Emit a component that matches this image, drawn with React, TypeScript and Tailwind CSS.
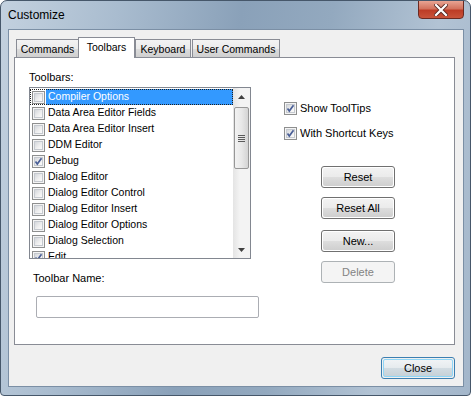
import React from 'react';

const toolbars = [
  { name: 'Compiler Options', checked: false },
  { name: 'Data Area Editor Fields', checked: false },
  { name: 'Data Area Editor Insert', checked: false },
  { name: 'DDM Editor', checked: false },
  { name: 'Debug', checked: true },
  { name: 'Dialog Editor', checked: false },
  { name: 'Dialog Editor Control', checked: false },
  { name: 'Dialog Editor Insert', checked: false },
  { name: 'Dialog Editor Options', checked: false },
  { name: 'Dialog Selection', checked: false },
  { name: 'Edit', checked: true },
];

const tabs = [
  { label: 'Commands', width: 'w-[63px]' },
  { label: 'Toolbars', width: 'w-[57px]' },
  { label: 'Keyboard', width: 'w-[56px]' },
  { label: 'User Commands', width: 'w-[88px]' },
];

const CheckBox = ({ checked }: { checked: boolean }) => (
  <div className="w-[13px] h-[13px] shrink-0 border border-[#8e8f8f] bg-[#f4f4f4] p-px">
    <div className="relative w-full h-full border border-[#c5c9cf] bg-[linear-gradient(135deg,#d4d7db_0%,#f0f0f0_60%,#fbfbfb_100%)]">
      {checked && (
        <svg className="absolute -left-[2px] -top-[2px]" width="11" height="11" viewBox="0 0 11 11">
          <path d="M2.5 5.5 L4.3 8 L8.5 2.2" fill="none" stroke="#4a5f97" strokeWidth="1.7" />
        </svg>
      )}
    </div>
  </div>
);

const Button = ({ label, disabled, isDefault }: { label: string; disabled?: boolean; isDefault?: boolean }) => {
  if (disabled) {
    return (
      <div className="w-[74px] h-[22px] rounded-[3px] border border-[#adb2b5] bg-[#f4f4f4] flex items-center justify-center text-[#838383]">
        {label}
      </div>
    );
  }
  return (
    <div
      className={`w-[74px] h-[22px] rounded-[3px] border ${
        isDefault ? 'border-[#3c7fb1]' : 'border-[#707070]'
      } p-px`}
    >
      <div
        className={`w-full h-full rounded-[2px] flex items-center justify-center text-black ${
          isDefault
            ? 'border border-[#8fd6f7] bg-[linear-gradient(180deg,#f0f3f5_0%,#e6ebee_48%,#d2dce2_52%,#c6d1d8_100%)]'
            : 'bg-[linear-gradient(180deg,#f2f2f2_0%,#ebebeb_48%,#dddddd_52%,#cfcfcf_100%)]'
        }`}
      >
        {label}
      </div>
    </div>
  );
};

const ScrollBar = () => (
  <div className="w-[17px] h-full flex flex-col bg-[linear-gradient(90deg,#e4e4e4_0%,#f3f3f3_40%,#f3f3f3_100%)]">
    <div className="h-[17px] flex items-center justify-center">
      <svg width="7" height="4" viewBox="0 0 7 4">
        <path d="M0 4 L3.5 0 L7 4 Z" fill="#404040" />
      </svg>
    </div>
    <div className="mx-px mt-[2px] h-[62px] rounded-[2px] border border-[#979797] bg-[linear-gradient(90deg,#f2f2f2_0%,#e8e8e8_50%,#d4d4d4_100%)] flex flex-col items-center justify-center gap-px">
      <div className="w-[7px] h-px bg-[#5a5a5a]" />
      <div className="w-[7px] h-px bg-[#5a5a5a]" />
      <div className="w-[7px] h-px bg-[#5a5a5a]" />
      <div className="w-[7px] h-px bg-[#5a5a5a]" />
    </div>
    <div className="flex-1" />
    <div className="h-[17px] flex items-center justify-center">
      <svg width="7" height="4" viewBox="0 0 7 4">
        <path d="M0 0 L7 0 L3.5 4 Z" fill="#404040" />
      </svg>
    </div>
  </div>
);

export default function App() {
  return (
    <div
      className="w-[471px] h-[396px] overflow-hidden rounded-t-[7px] rounded-b-[4px] border border-[#46576a] bg-[linear-gradient(100deg,#c3d1df_0%,#a9bccf_22%,#8aa1b9_45%,#93a9bf_62%,#b2c3d4_82%,#a3b6ca_100%)] text-[11px] text-black"
      style={{ fontFamily: '"Liberation Sans", Arial, sans-serif' }}
    >
      {/* title bar */}
      <div className="h-[28px] flex items-start justify-between pl-[7px] pr-[6px]">
        <div className="mt-[7px] text-[12px] leading-[15px] text-black">Customize</div>
        <div className="w-[46px] h-[19px] -mt-px rounded-b-[4px] border border-[#6b2a22] bg-[linear-gradient(180deg,#e8a493_0%,#d2735e_45%,#bd3c26_55%,#c9533a_100%)] flex items-center justify-center">
          <svg width="14" height="12" viewBox="0 0 14 12">
            <path d="M2 1 L12 11 M12 1 L2 11" stroke="#5b2a24" strokeWidth="4" strokeLinecap="square" />
            <path d="M2 1 L12 11 M12 1 L2 11" stroke="#ffffff" strokeWidth="2.2" strokeLinecap="square" />
          </svg>
        </div>
      </div>

      {/* client area */}
      <div className="ml-[7px] w-[456px] h-[358px] border border-[#7b8fa5] bg-[#f0f0f0] flex flex-col">
        <div className="pl-[5px] pt-[7px]">
          {/* tab strip */}
          <div className="relative z-10 -mb-px flex items-end h-[21px] pl-[2px] text-[10.5px]">
            {tabs.map((t) =>
              t.label === 'Toolbars' ? (
                <div
                  key={t.label}
                  className={`${t.width} h-[21px] -ml-px border border-b-0 border-[#898c95] bg-white flex items-start justify-center pt-[3px] leading-[13px]`}
                >
                  {t.label}
                </div>
              ) : (
                <div
                  key={t.label}
                  className={`${t.width} h-[19px] ${t.label === 'User Commands' ? 'ml-px' : ''} border border-[#898c95] bg-[linear-gradient(180deg,#f3f3f3_0%,#ebebeb_50%,#dddddd_51%,#cfcfcf_100%)] flex items-start justify-center pt-[3px] leading-[13px]`}
                >
                  {t.label}
                </div>
              )
            )}
          </div>

          {/* tab panel */}
          <div className="w-[441px] h-[288px] border border-[#898c95] bg-white flex">
            <div className="w-[244px] pl-[14px] pt-[13px] flex flex-col">
              <div className="leading-[13px]">Toolbars:</div>
              <div className="mt-[3px] w-[222px] h-[172px] border border-[#828790] flex overflow-hidden text-[10.5px]">
                <div className="flex-1 pt-px overflow-hidden">
                  {toolbars.map((tb, i) => (
                    <div
                      key={tb.name}
                      className={`h-[16px] flex items-center pl-[2px] ${
                        i === 0 ? 'outline-1 outline-dotted outline-[#202020] -outline-offset-1' : ''
                      }`}
                    >
                      <CheckBox checked={tb.checked} />
                      <div
                        className={`ml-px h-[16px] flex items-center pl-[2px] ${
                          i === 0 ? 'flex-1 bg-[#3399ff] text-white' : ''
                        }`}
                      >
                        {tb.name}
                      </div>
                    </div>
                  ))}
                </div>
                <ScrollBar />
              </div>
              <div className="mt-[13px] ml-[4px] leading-[13px]">Toolbar Name:</div>
              <div className="mt-[11px] ml-[7px] w-[223px] h-[22px] rounded-[2px] border border-[#abadb3] bg-white" />
            </div>

            <div className="ml-[25px] pt-[44px] flex flex-col">
              <div className="h-[13px] flex items-center gap-[3px]">
                <CheckBox checked />
                <span>Show ToolTips</span>
              </div>
              <div className="mt-[12px] h-[13px] flex items-center gap-[3px]">
                <CheckBox checked />
                <span>With Shortcut Keys</span>
              </div>
              <div className="ml-[37px] mt-[26px] flex flex-col">
                <Button label="Reset" />
                <div className="mt-[9px]">
                  <Button label="Reset All" />
                </div>
                <div className="mt-[11px]">
                  <Button label="New..." />
                </div>
                <div className="mt-[9px]">
                  <Button label="Delete" disabled />
                </div>
              </div>
            </div>
          </div>
        </div>

        <div className="mt-[12px] flex justify-end pr-[8px]">
          <Button label="Close" isDefault />
        </div>
      </div>
    </div>
  );
}
